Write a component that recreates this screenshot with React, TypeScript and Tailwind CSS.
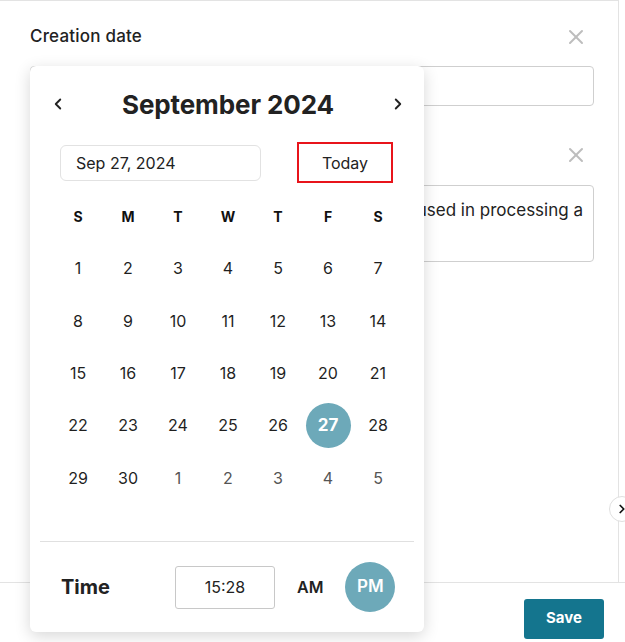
import { ChevronLeft, ChevronRight, X } from "lucide-react";

const weekDays = ["S", "M", "T", "W", "T", "F", "S"];

const days: { n: number; muted?: boolean }[] = [
  ...Array.from({ length: 30 }, (_, i) => ({ n: i + 1 })),
  ...[1, 2, 3, 4, 5].map((n) => ({ n, muted: true })),
];

const font = { fontFamily: "Inter, 'Open Sans', sans-serif" };

const DayCell = ({ n, muted }: { n: number; muted?: boolean }) => {
  const selected = n === 27 && !muted;
  return (
    <div className="flex h-[52.4px] items-center justify-center">
      {selected ? (
        <span className="flex h-[45px] w-[45px] items-center justify-center rounded-full bg-[#6da9b9] text-[17px] font-bold text-white">
          {n}
        </span>
      ) : (
        <span
          className={`text-[16px] ${muted ? "text-[#555555]" : "text-[#1f1f1f]"}`}
        >
          {n}
        </span>
      )}
    </div>
  );
};

const DatePopover = () => (
  <div className="absolute left-[30px] top-[66px] flex h-[566px] w-[394px] flex-col rounded-md bg-white shadow-[0_4px_16px_rgba(0,0,0,0.16)]">
    <div className="flex h-[76px] items-center justify-between pl-[19px] pr-[17px]">
      <ChevronLeft className="h-[18px] w-[18px] text-[#222]" strokeWidth={2.5} />
      <span className="text-[26px] font-bold tracking-[-0.1px] text-[#222]">
        September 2024
      </span>
      <ChevronRight className="h-[18px] w-[18px] text-[#222]" strokeWidth={2.5} />
    </div>

    <div className="flex items-center justify-between pl-[30px] pr-[31px]">
      <div className="flex h-[36px] w-[201px] items-center rounded-md border border-[#e2e2e2] px-[15px] text-[16px] text-[#222]">
        Sep 27, 2024
      </div>
      <button className="flex h-[41px] w-[96px] items-center justify-center border-2 border-[#e8141b] text-[16px] text-[#222]">
        Today
      </button>
    </div>

    <div className="mt-[16px] grid grid-cols-7 pl-[23px] pr-[21px]">
      {weekDays.map((d, i) => (
        <div
          key={i}
          className="flex h-[36px] items-center justify-center text-[14px] font-bold leading-none text-[#111]"
        >
          {d}
        </div>
      ))}
      <div className="col-span-7 h-[7px]" />
      {days.map((d, i) => (
        <DayCell key={i} n={d.n} muted={d.muted} />
      ))}
    </div>

    <div className="mx-[10px] mt-auto border-t border-[#e0e0e0]" />
    <div className="flex h-[90px] items-center pl-[31px]">
      <span className="w-[114px] text-[20px] font-bold text-[#222]">Time</span>
      <div className="flex h-[43px] w-[100px] items-center justify-center rounded-[3px] border border-[#c8c8c8] text-[16px] text-[#222]">
        15:28
      </div>
      <span className="ml-[22px] text-[16px] font-semibold text-[#222]">AM</span>
      <span className="ml-[22px] flex h-[50px] w-[50px] items-center justify-center rounded-full bg-[#6da9b9] text-[17px] font-semibold text-white">
        PM
      </span>
    </div>
  </div>
);

export default function App() {
  return (
    <div className="relative h-[642px] w-[625px] overflow-hidden bg-white" style={font}>
      <div className="flex h-full flex-col">
        <div className="flex h-[582px] w-[619px] flex-col border-r border-t border-[#e3e3e3] pl-[30px] pr-[24px]">
          <div className="mt-[23px] flex items-center justify-between">
            <span className="text-[17px] font-medium tracking-[0.2px] text-[#222]">
              Creation date
            </span>
            <X className="mr-[6px] h-[24px] w-[24px] text-[#bdbdbd]" strokeWidth={2} />
          </div>
          <div className="mt-[16px] h-[40px] rounded-[4px] border border-[#cfcfcf]" />
          <div className="mt-[37px] flex items-center justify-between">
            <span className="text-[17px] font-medium text-[#222]">Description</span>
            <X className="mr-[6px] h-[24px] w-[24px] text-[#bdbdbd]" strokeWidth={2} />
          </div>
          <div className="mt-[17px] flex h-[77px] justify-end overflow-hidden rounded-[4px] border border-[#cfcfcf] pr-[10px] pt-[12px]">
            <span className="whitespace-nowrap text-[17px] text-[#222]">
              used in processing a
            </span>
          </div>
        </div>
        <div className="flex flex-1 items-center justify-end border-t border-[#e3e3e3] pr-[21px]">
          <button className="mt-[12px] flex h-[40px] w-[80px] items-center justify-center rounded-[3px] bg-[#14758e] text-[15px] font-bold text-white">
            Save
          </button>
        </div>
      </div>

      <button className="absolute right-[-10px] top-[496px] flex h-[26px] w-[26px] items-center justify-center rounded-full border border-[#e0e0e0] bg-white">
        <ChevronRight className="h-[14px] w-[14px] text-[#111]" strokeWidth={3} />
      </button>

      <DatePopover />
    </div>
  );
}
